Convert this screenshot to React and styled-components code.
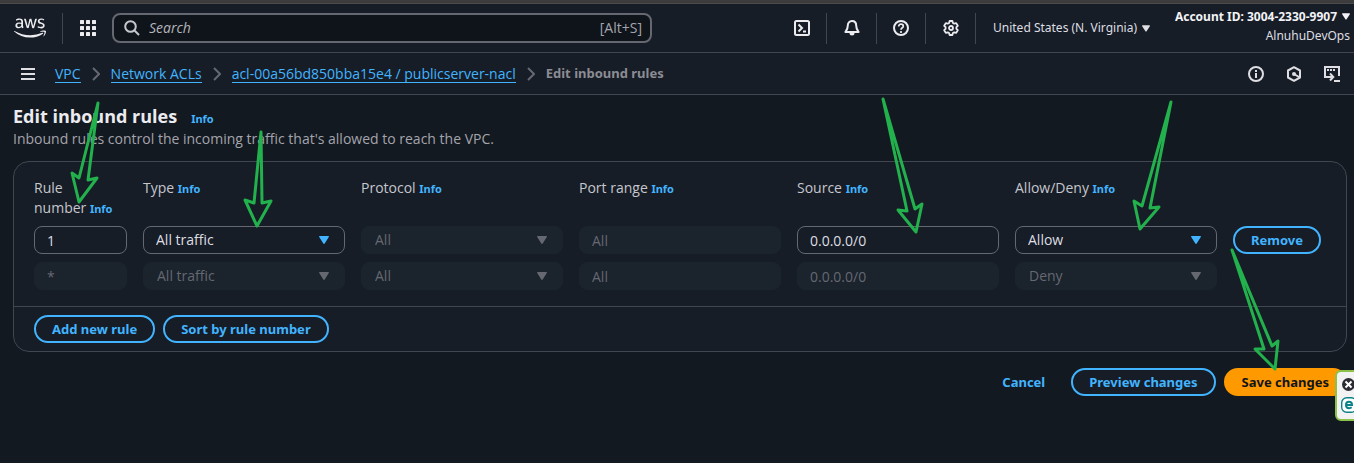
import React from 'react';
import styled, { createGlobalStyle } from 'styled-components';
import { FaAws } from 'react-icons/fa';

const line = '#424650';
const link = '#42b4ff';
const compactFont = '"Noto Sans", sans-serif';

const GlobalStyle = createGlobalStyle`
  *, *::before, *::after { box-sizing: border-box; }
  body {
    margin: 0;
    background: #131920;
    color: #c6c6cd;
    font: 14px/20px "Open Sans", "Noto Sans", sans-serif;
  }
  button, input, select { font: inherit; }
`;

const Page = styled.div`
  position: relative;
  overflow: hidden;
  min-height: 100vh;
`;

const Header = styled.header`
  display: flex;
  align-items: center;
  height: 53px;
  padding-top: 4px;
  background: linear-gradient(#3c3c3c 3px, #4a4a4c 3px, #4a4a4c 4px, #161d26 4px);
  border-bottom: 1px solid ${line};
  color: #ebebf0;
`;

const LogoLink = styled.a`
  display: flex;
  align-items: center;
  width: 63px;
  height: 31px;
  padding-left: 14px;
  border-right: 1px solid ${line};
  color: #ebebf0;
`;

const IconButton = styled.button`
  display: flex;
  align-items: center;
  justify-content: center;
  flex: none;
  width: ${(p) => p.$width || 16}px;
  height: 31px;
  padding: 0;
  background: none;
  border: 0;
  border-right: ${(p) => (p.$divided ? `1px solid ${line}` : '0')};
  color: ${(p) => (p.$muted ? '#dedee3' : '#ebebf0')};
`;

const Search = styled.label`
  display: flex;
  align-items: center;
  gap: 9px;
  flex: 0 1 540px;
  height: 30px;
  padding: 0 8px 0 10px;
  background: #0f141a;
  border: 2px solid #656871;
  border-radius: 8px;
  color: #c6c6cd;
`;

const SearchInput = styled.input`
  flex: 1;
  min-width: 0;
  padding: 0;
  background: none;
  border: 0;
  outline: 0;
  color: inherit;
  &::placeholder { color: #b4b4bb; font-style: italic; opacity: 1; }
`;

const Shortcut = styled.span`
  color: #a4a4ad;
`;

const Tools = styled.div`
  display: flex;
  align-items: center;
  margin-left: auto;
`;

const RegionButton = styled.button`
  display: flex;
  align-items: center;
  gap: 5px;
  width: 178px;
  padding: 0 0 0 17px;
  background: none;
  border: 0;
  color: #dedee3;
  font-family: ${compactFont};
  font-size: 12px;
  white-space: nowrap;
`;

const AccountButton = styled.button`
  display: flex;
  flex-direction: column;
  align-items: flex-end;
  width: 200px;
  padding: 0 4px 4px 0;
  background: none;
  border: 0;
  color: #dedee3;
  font-family: ${compactFont};
  font-size: 12px;
  line-height: 19px;
  white-space: nowrap;
`;

const AccountId = styled.span`
  display: flex;
  align-items: center;
  gap: 5px;
  color: #f3f3f7;
  font-weight: 700;
`;

const NavBar = styled.div`
  display: flex;
  align-items: center;
  height: 42px;
  padding: 0 14px 0 20px;
  background: #161d26;
  border-bottom: 1px solid ${line};
`;

const Crumbs = styled.ol`
  display: flex;
  align-items: center;
  gap: 11px;
  margin: 0 0 0 19px;
  padding: 0;
  list-style: none;
  line-height: 17px;
`;

const Crumb = styled.li`
  display: flex;
  align-items: center;
  gap: 11px;
`;

const CurrentCrumb = styled(Crumb)`
  color: #8c8c94;
  font-family: ${compactFont};
  font-size: 13px;
  font-weight: 700;
`;

const CrumbLink = styled.a`
  border-bottom: 1px solid ${link};
  color: ${link};
  text-decoration: none;
`;

const NavTools = styled.div`
  display: flex;
  gap: 22px;
  margin-left: auto;
`;

const Main = styled.main`
  padding: 9px 7px 16px 13px;
`;

const TitleRow = styled.div`
  display: flex;
  align-items: baseline;
  gap: 14px;
`;

const Title = styled.h1`
  margin: 0;
  color: #ebebf0;
  font-size: 18px;
  line-height: 25px;
`;

const InfoLink = styled.a`
  color: ${link};
  font-family: ${compactFont};
  font-size: 11px;
  font-weight: 700;
  line-height: 12px;
  text-decoration: none;
`;

const Description = styled.p`
  margin: 0 0 12px;
  color: #a4a4ad;
`;

const Card = styled.section`
  background: #161d26;
  border: 1px solid ${line};
  border-radius: 16px;
`;

const TableWrap = styled.div`
  padding: 16px 4px 8px 20px;
`;

const Table = styled.table`
  width: 100%;
  table-layout: fixed;
  border-collapse: collapse;
`;

const Col = styled.col`
  width: ${(p) => (p.$wide ? 'calc(100% / 6)' : 'calc(100% / 12)')};
`;

const HeadCell = styled.th`
  padding: 0 16px 8px 0;
  font-weight: 400;
  text-align: left;
  vertical-align: top;
`;

const Cell = styled.td`
  padding: 0 16px 8px 0;
  vertical-align: top;
`;

const Field = styled.input`
  display: block;
  width: 100%;
  height: 28px;
  padding: 0 12px;
  background: #161d26;
  border: 1px solid #656871;
  border-radius: 8px;
  color: #dedee3;
  &:disabled {
    background: #1b232d;
    border-color: #1b232d;
    color: #656871;
    opacity: 1;
  }
`;

const SelectBox = styled.div`
  display: grid;
  align-items: center;
  > * { grid-area: 1 / 1; }
  > svg {
    justify-self: end;
    margin-right: 16px;
    color: ${(p) => (p.$disabled ? '#656871' : link)};
    pointer-events: none;
  }
`;

const SelectField = styled(Field)`
  appearance: none;
  &:disabled { padding-left: 13px; }
`;

const Button = styled.button`
  height: 28px;
  padding: 0 16px;
  background: ${(p) => (p.$primary ? '#ff9900' : p.$plain ? 'transparent' : '#161d26')};
  border: 2px solid ${(p) => (p.$primary ? '#ff9900' : p.$plain ? 'transparent' : link)};
  border-radius: 20px;
  color: ${(p) => (p.$primary ? '#0f141a' : link)};
  font-family: ${compactFont};
  font-size: 13px;
  font-weight: 700;
  line-height: 20px;
  white-space: nowrap;
`;

const CardFooter = styled.div`
  display: flex;
  gap: 8px;
  padding: 8px 20px;
  border-top: 1px solid ${line};
`;

const Actions = styled.div`
  display: flex;
  justify-content: flex-end;
  gap: 8px;
  margin-top: 16px;
`;

const Annotations = styled.svg`
  position: absolute;
  top: 0;
  left: 0;
  pointer-events: none;
`;

const Widget = styled.aside`
  position: absolute;
  top: 370px;
  right: -6px;
  display: flex;
  flex-direction: column;
  align-items: flex-start;
  gap: 6px;
  width: 25px;
  height: 51px;
  padding: 6px 0 0 4px;
  background: #f2f2f2;
  border: 2px solid #8bc34a;
  border-radius: 6px;
`;

const WidgetButton = styled.button`
  display: flex;
  padding: 0 0 0 ${(p) => (p.$inset ? 1 : 0)}px;
  background: none;
  border: 0;
`;

const Caret = ({ size = 10 }) => (
  <svg width={size} height={size === 10 ? 8 : 7} viewBox="0 0 10 8" fill="currentColor" aria-hidden="true">
    <path d="M.8 0h8.400c.7 0 1 .6.6 1.100L5.700 7.500c-.4.600-1 .600-1.400 0L.2 1.100C-.2.600.1 0 .8 0z" />
  </svg>
);

const Icon = ({ children, size = 16, width = 2 }) => (
  <svg width={size} height={size} viewBox="0 0 16 16" fill="none" stroke="currentColor" strokeWidth={width} aria-hidden="true">
    {children}
  </svg>
);

const Chevron = () => (
  <svg width="8" height="14" viewBox="0 0 8 14" fill="none" stroke="#656871" strokeWidth="2" aria-hidden="true">
    <path d="M1 1l6 6-6 6" />
  </svg>
);

const GridIcon = () => (
  <svg width="16" height="16" viewBox="0 0 16 16" fill="currentColor" aria-hidden="true">
    {[0, 6, 12].map((y) => [0, 6, 12].map((x) => <rect key={`${x}-${y}`} x={x} y={y} width="4" height="4" rx=".5" />))}
  </svg>
);

const Info = ({ topic }) => <InfoLink href="#info" aria-label={`Info about ${topic}`}>Info</InfoLink>;

const Select = ({ label, value, disabled }) => (
  <SelectBox $disabled={disabled}>
    <SelectField as="select" aria-label={label} defaultValue={value} disabled={disabled}>
      <option>{value}</option>
    </SelectField>
    <Caret />
  </SelectBox>
);

const columns = [
  { name: 'Rule number' },
  { name: 'Type', wide: true, select: true },
  { name: 'Protocol', wide: true, select: true },
  { name: 'Port range', wide: true },
  { name: 'Source', wide: true },
  { name: 'Allow/Deny', wide: true, select: true },
];

const rules = [
  { values: ['1', 'All traffic', 'All', 'All', '0.0.0.0/0', 'Allow'], locked: [2, 3], removable: true },
  { values: ['*', 'All traffic', 'All', 'All', '0.0.0.0/0', 'Deny'], locked: [0, 1, 2, 3, 4, 5] },
];

const crumbs = ['VPC', 'Network ACLs', 'acl-00a56bd850bba15e4 / publicserver-nacl'];

const arrows = [
  '98,103 79,178 72,173 79,202 97,178 88,180',
  '261,132 254,203 245,200 257,226 271,201 262,203',
  '883,99 907,211 898,210 916,232 922,204 915,209',
  '1171,102 1142,206 1134,201 1140,229 1159,207 1150,208',
  '1232,250 1264,349 1255,349 1275,369 1278,341 1272,346',
];

export default function App() {
  return (
    <Page>
      <GlobalStyle />
      <Header>
        <LogoLink href="#home" aria-label="AWS home">
          <FaAws size={32} />
        </LogoLink>
        <IconButton $width={49} aria-label="Services"><GridIcon /></IconButton>
        <Search>
          <Icon>
            <circle cx="6.500" cy="6.500" r="5.300" />
            <path d="M10.500 10.500L15 15" />
          </Icon>
          <SearchInput type="text" placeholder="Search" aria-label="Search" />
          <Shortcut>[Alt+S]</Shortcut>
        </Search>
        <Tools>
          <IconButton $width={50} $divided aria-label="CloudShell">
            <Icon>
              <rect x="1" y="1" width="14" height="14" rx="1.500" />
              <path d="M4.500 4.500L8 8l-3.500 3.500M9 11.500h3" />
            </Icon>
          </IconButton>
          <IconButton $width={50} $divided aria-label="Notifications">
            <Icon>
              <path d="M8 1C5.300 1 3.800 3 3.800 5.500 3.800 9 2.800 10 1.400 12h13.200C13.200 10 12.200 9 12.200 5.500 12.200 3 10.700 1 8 1z" strokeLinejoin="round" />
              <path d="M5.500 13a2.500 2.500 0 0 0 5 0z" fill="currentColor" stroke="none" />
            </Icon>
          </IconButton>
          <IconButton $width={49} $divided aria-label="Help">
            <Icon>
              <circle cx="8" cy="8" r="7" />
              <path d="M5.700 6.500C5.700 5 6.600 4.200 8 4.200s2.300.8 2.300 2C10.300 7.800 8 7.800 8 9.800M8 11v2" strokeWidth="1.700" />
            </Icon>
          </IconButton>
          <IconButton $width={50} $divided aria-label="Settings">
            <Icon width={1.8}>
              <path d="M6.600 1h2.800l.5 2 1.300.7 2-.6 1.600 2.700L13.400 7.200v1.600l1.400 1.400-1.600 2.700-2-.6-1.300.7-.5 2H6.600l-.5-2-1.300-.7-2 .6-1.600-2.700L2.600 8.800V7.200L1.200 5.800l1.600-2.700 2 .6L6.100 3z" strokeLinejoin="round" />
              <circle cx="8" cy="8" r="2" />
            </Icon>
          </IconButton>
          <RegionButton>United States (N. Virginia)<Caret size={8} /></RegionButton>
          <AccountButton>
            <AccountId>Account ID: 3004-2330-9907<Caret size={8} /></AccountId>
            <span>AlnuhuDevOps</span>
          </AccountButton>
        </Tools>
      </Header>

      <NavBar>
        <IconButton $muted aria-label="Open navigation">
          <Icon><path d="M1 3h14M1 8h14M1 13h14" /></Icon>
        </IconButton>
        <nav aria-label="Breadcrumbs">
          <Crumbs>
            {crumbs.map((name) => (
              <Crumb key={name}><CrumbLink href="#crumb">{name}</CrumbLink><Chevron /></Crumb>
            ))}
            <CurrentCrumb aria-current="page">Edit inbound rules</CurrentCrumb>
          </Crumbs>
        </nav>
        <NavTools>
          <IconButton $muted aria-label="Information">
            <Icon>
              <circle cx="8" cy="8" r="7" />
              <path d="M8 4v2M8 7v5" />
            </Icon>
          </IconButton>
          <IconButton $muted aria-label="Amazon Q">
            <Icon>
              <path d="M8 1.200l6 3.300v7l-6 3.300-6-3.300v-7z" strokeLinejoin="round" />
              <circle cx="8" cy="8" r="2" fill="currentColor" stroke="none" />
              <path d="M8 8l5 3" />
            </Icon>
          </IconButton>
          <IconButton $muted aria-label="Open console">
            <Icon>
              <path d="M4 11H1V1h14v9M10 15h6" />
              <path d="M3 4h2M6 4h2M9 4h2" />
              <path d="M4 11h5M6 7.500L9.300 11 6 14.500" />
            </Icon>
          </IconButton>
        </NavTools>
      </NavBar>

      <Main>
        <TitleRow>
          <Title>Edit inbound rules</Title>
          <Info topic="inbound rules" />
        </TitleRow>
        <Description>Inbound rules control the incoming traffic that's allowed to reach the VPC.</Description>

        <Card>
          <TableWrap>
            <Table>
              <colgroup>
                {columns.map((c) => <Col key={c.name} $wide={c.wide} />)}
                <Col />
              </colgroup>
              <thead>
                <tr>
                  {columns.map((c) => (
                    <HeadCell key={c.name} scope="col">{c.name}{'\u00a0'}<Info topic={c.name} /></HeadCell>
                  ))}
                  <HeadCell as="td" />
                </tr>
              </thead>
              <tbody>
                {rules.map((rule) => (
                  <tr key={rule.values[0]}>
                    {columns.map((c, i) => {
                      const props = { value: rule.values[i], disabled: rule.locked.includes(i) };
                      const label = `${c.name}, rule ${rule.values[0]}`;
                      return (
                        <Cell key={c.name}>
                          {c.select
                            ? <Select label={label} {...props} />
                            : <Field type="text" aria-label={label} defaultValue={props.value} disabled={props.disabled} />}
                        </Cell>
                      );
                    })}
                    <Cell>{rule.removable && <Button>Remove</Button>}</Cell>
                  </tr>
                ))}
              </tbody>
            </Table>
          </TableWrap>
          <CardFooter>
            <Button>Add new rule</Button>
            <Button>Sort by rule number</Button>
          </CardFooter>
        </Card>

        <Actions>
          <Button $plain>Cancel</Button>
          <Button>Preview changes</Button>
          <Button $primary>Save changes</Button>
        </Actions>
      </Main>

      <Widget aria-label="Extension">
        <WidgetButton $inset aria-label="Close">
          <svg width="13" height="13" viewBox="0 0 13 13" aria-hidden="true">
            <circle cx="6.500" cy="6.500" r="6.500" fill="#2b2b33" />
            <path d="M3.500 3.500l6 6M9.500 3.500l-6 6" stroke="#fff" strokeWidth="2" />
          </svg>
        </WidgetButton>
        <WidgetButton aria-label="Open extension">
          <svg width="16" height="16" viewBox="0 0 16 16" fill="none" stroke="#0b8286" aria-hidden="true">
            <rect x=".7" y=".7" width="14.600" height="14.600" rx="5" strokeWidth="1.400" fill="#fff" />
            <path d="M5 8h6c0-2-1.200-3.200-3-3.200S5 6 5 8s1.200 3.200 3.200 3.200c1 0 1.800-.3 2.500-.9" strokeWidth="2" />
          </svg>
        </WidgetButton>
      </Widget>

      <Annotations width="1354" height="463" viewBox="0 0 1354 463" fill="none" stroke="#22b14c" strokeWidth="3" strokeLinejoin="round" aria-hidden="true">
        {arrows.map((points) => <polygon key={points} points={points} />)}
      </Annotations>
    </Page>
  );
}
